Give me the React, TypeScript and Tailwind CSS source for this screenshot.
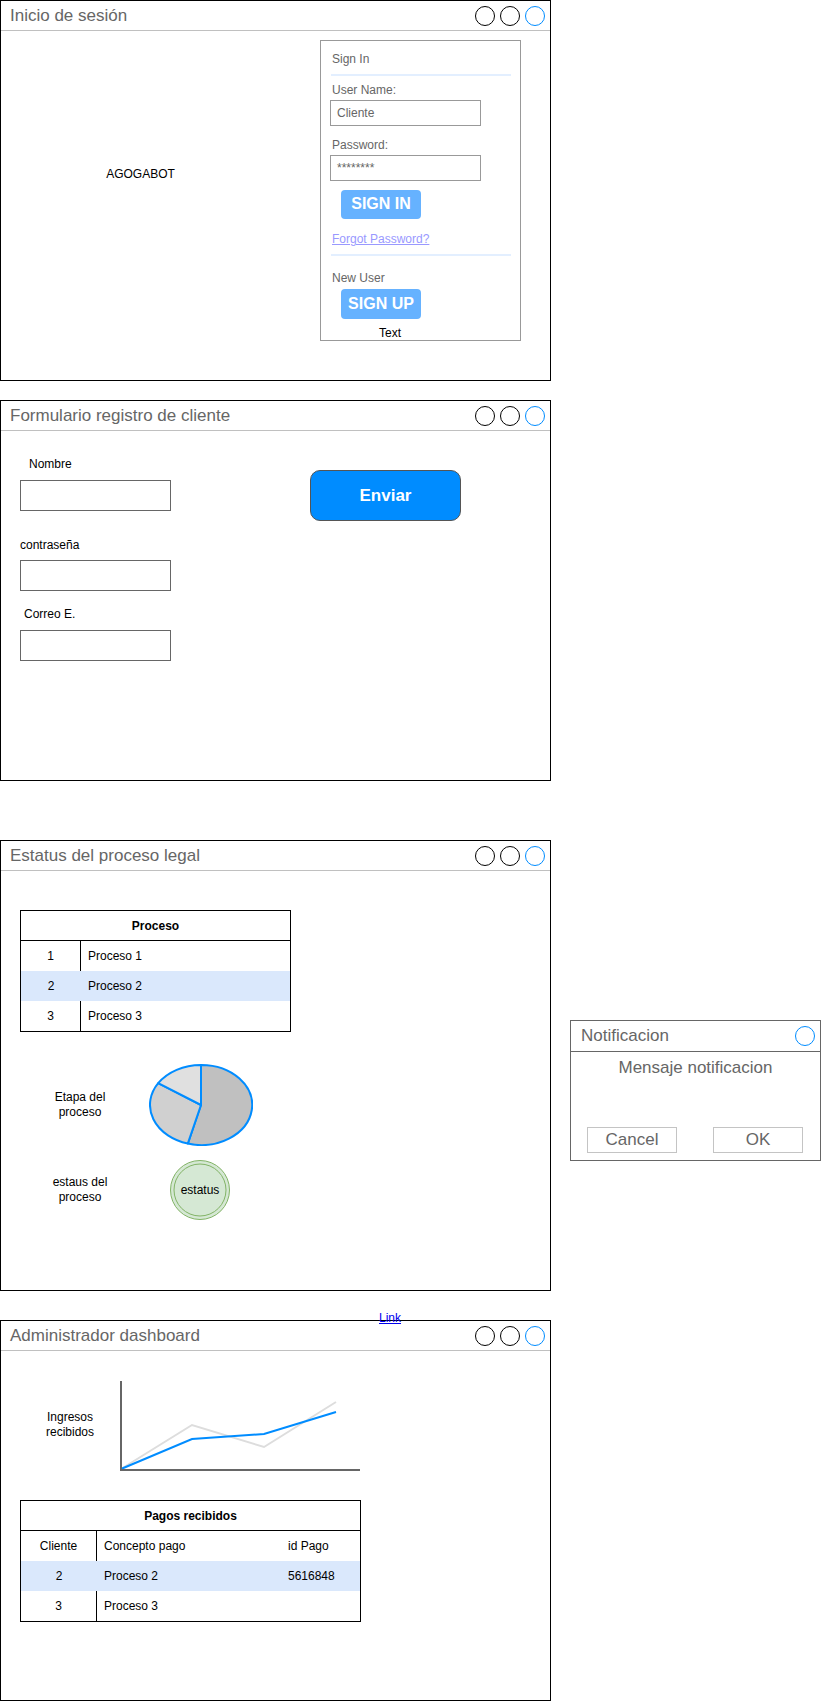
import React from "react";

const font = "font-['Liberation_Sans',Helvetica,Arial,sans-serif]";

interface WindowProps {
  title: string;
  heightClass: string;
  children?: React.ReactNode;
}

/**
 * Wireframe browser window: grey title, three round buttons, thin rule
 */
const MockWindow: React.FC<WindowProps> = ({ title, heightClass, children }) => (
  <div className={`relative w-[551px] shrink-0 border border-black bg-white ${heightClass}`}>
    <div className="flex h-[30px] items-center justify-between border-b border-[#c0c0c0] pl-[9px] pr-[5px]">
      <span className="text-[17px] leading-5 text-[#666]">{title}</span>
      <div className="flex gap-[5px]">
        <span className="h-5 w-5 rounded-full border border-black" />
        <span className="h-5 w-5 rounded-full border border-black" />
        <span className="h-5 w-5 rounded-full border border-[#008cff]" />
      </div>
    </div>
    {children}
  </div>
);

const Sep = () => <div className="mt-[8px] h-[2px] w-[180px] bg-[#e3efff]" />;

const LoginPanel = () => (
  <div className="ml-[40px] flex h-[301px] w-[201px] flex-col border border-[#999] pl-[10px] text-[12px] leading-[14px] text-[#666]">
    <span className="mt-[11px] pl-[1px]">Sign In</span>
    <Sep />
    <span className="mt-[7px] pl-[1px]">User Name:</span>
    <div className="-ml-[1px] mt-[3px] flex h-[26px] w-[151px] items-center border border-[#999] pl-[6px]">
      Cliente
    </div>
    <span className="mt-[12px] pl-[1px]">Password:</span>
    <div className="-ml-[1px] mt-[3px] flex h-[26px] w-[151px] items-center border border-[#999] pl-[6px]">
      ********
    </div>
    <button
      type="button"
      className="ml-[10px] mt-[9px] flex h-[30px] w-[80px] items-center justify-center rounded-[4px] bg-[#66b2ff] text-[16px] font-bold text-white"
    >
      SIGN IN
    </button>
    <span className="mt-[13px] pl-[1px] text-[#9999ff] underline">Forgot Password?</span>
    <Sep />
    <span className="mt-[15px] pl-[1px]">New User</span>
    <button
      type="button"
      className="ml-[10px] mt-[4px] flex h-[30px] w-[80px] items-center justify-center rounded-[4px] bg-[#66b2ff] text-[16px] font-bold text-white"
    >
      SIGN UP
    </button>
    <span className="ml-[29px] mt-[7px] w-[60px] text-center text-black">Text</span>
  </div>
);

const Field: React.FC<{ label: string; labelPad: string; gap: string; top: string }> = ({
  label,
  labelPad,
  gap,
  top,
}) => (
  <>
    <span className={`${top} ${labelPad} text-[12px] leading-[14px]`}>{label}</span>
    <div className={`${gap} h-[31px] w-[151px] border border-[#666]`} />
  </>
);

const ProcesoTable = () => {
  const rows = [
    { n: "1", t: "Proceso 1", hi: false },
    { n: "2", t: "Proceso 2", hi: true },
    { n: "3", t: "Proceso 3", hi: false },
  ];
  return (
    <div className="mt-[39px] w-[271px] border border-black text-[12px] leading-[14px]">
      <div className="flex h-[30px] items-center justify-center border-b border-black font-bold">
        Proceso
      </div>
      {rows.map((r) => (
        <div key={r.n} className={`flex h-[30px] items-stretch ${r.hi ? "bg-[#dae8fc]" : ""}`}>
          <div
            className={`flex w-[60px] items-center justify-center ${r.hi ? "" : "border-r border-black"}`}
          >
            {r.n}
          </div>
          <div className="flex items-center pl-[7px]">{r.t}</div>
        </div>
      ))}
    </div>
  );
};

const PagosTable = () => {
  const rows = [
    { c: "Cliente", p: "Concepto pago", id: "id Pago", hi: false },
    { c: "2", p: "Proceso 2", id: "5616848", hi: true },
    { c: "3", p: "Proceso 3", id: "", hi: false },
  ];
  return (
    <div className="mt-[25px] w-[341px] border border-black text-[12px] leading-[14px]">
      <div className="flex h-[30px] items-center justify-center border-b border-black font-bold">
        Pagos recibidos
      </div>
      {rows.map((r) => (
        <div key={r.c} className={`flex h-[30px] items-stretch ${r.hi ? "bg-[#dae8fc]" : ""}`}>
          <div
            className={`flex w-[76px] items-center justify-center ${r.hi ? "" : "border-r border-black"}`}
          >
            {r.c}
          </div>
          <div className="flex w-[191px] items-center pl-[7px]">{r.p}</div>
          <div className="flex items-center">{r.id}</div>
        </div>
      ))}
    </div>
  );
};

const Pie = () => (
  <svg width="104" height="82" viewBox="0 0 104 82" className="ml-[9px]">
    <path d="M52,41 L52,1 A51,40 0 1 1 38.8,79.6 Z" fill="#c0c0c0" stroke="#008cff" strokeWidth="2" strokeLinejoin="round" />
    <path d="M52,41 L38.8,79.6 A51,40 0 0 1 9.2,19.2 Z" fill="#d0d0d0" stroke="#008cff" strokeWidth="2" strokeLinejoin="round" />
    <path d="M52,41 L9.2,19.2 A51,40 0 0 1 52,1 Z" fill="#e0e0e0" stroke="#008cff" strokeWidth="2" strokeLinejoin="round" />
  </svg>
);

const StatusBadge = () => (
  <div className="relative ml-[29px] flex h-[62px] w-[62px] items-center justify-center">
    <svg width="62" height="62" viewBox="0 0 62 62" className="absolute inset-0">
      <circle cx="31" cy="31" r="29.5" fill="#d5e8d4" stroke="#82b366" />
      <circle cx="31" cy="31" r="26" fill="none" stroke="#82b366" />
    </svg>
    <span className="relative text-[12px] leading-[14px]">estatus</span>
  </div>
);

const LineChart = () => (
  <svg width="250" height="100" viewBox="0 0 250 100">
    <polyline points="1,94 72,50 144,72 216,27" fill="none" stroke="#dddddd" strokeWidth="2" />
    <polyline points="1,94 72,64 144,59 216,37" fill="none" stroke="#008cff" strokeWidth="2" />
    <path d="M1,6 L1,95 L240,95" fill="none" stroke="#666" strokeWidth="2" />
  </svg>
);

const Notification = () => (
  <div className="ml-[19px] mt-[180px] flex h-[141px] w-[251px] flex-col border border-[#666] bg-white text-[#666]">
    <div className="flex h-[31px] items-center justify-between border-b border-[#666] pl-[10px] pr-[5px]">
      <span className="text-[17px] leading-5">Notificacion</span>
      <span className="h-5 w-5 rounded-full border border-[#008cff]" />
    </div>
    <div className="mt-[6px] text-center text-[17px] leading-5">Mensaje notificacion</div>
    <div className="mt-[49px] flex gap-[36px] pl-[16px]">
      <div className="flex h-[26px] w-[90px] items-center justify-center border border-[#c4c4c4] text-[17px]">
        Cancel
      </div>
      <div className="flex h-[26px] w-[90px] items-center justify-center border border-[#c4c4c4] text-[17px]">
        OK
      </div>
    </div>
  </div>
);

export default function App() {
  return (
    <div className={`${font} flex min-h-[1701px] w-[821px] flex-col bg-white text-black`}>
      {/* Login */}
      <MockWindow title="Inicio de sesión" heightClass="h-[381px]">
        <div className="mt-[9px] flex">
          <div className="w-[279px] pt-[127px] text-center text-[12px] leading-[14px]">AGOGABOT</div>
          <LoginPanel />
        </div>
      </MockWindow>

      {/* Registro de cliente */}
      <div className="mt-[19px]">
        <MockWindow title="Formulario registro de cliente" heightClass="h-[381px]">
          <div className="flex pl-[19px]">
            <div className="flex w-[151px] flex-col">
              <Field label="Nombre" labelPad="pl-[9px]" top="mt-[26px]" gap="mt-[9px]" />
              <Field label="contraseña" labelPad="" top="mt-[27px]" gap="mt-[8px]" />
              <Field label="Correo E." labelPad="pl-[4px]" top="mt-[16px]" gap="mt-[9px]" />
            </div>
            <button
              type="button"
              className="ml-[139px] mt-[39px] flex h-[51px] w-[151px] items-center justify-center rounded-[10px] border border-[#555] bg-[#008cff] text-[17px] font-bold text-white"
            >
              Enviar
            </button>
          </div>
        </MockWindow>
      </div>

      {/* Estatus + notificacion */}
      <div className="mt-[59px] flex items-start">
        <MockWindow title="Estatus del proceso legal" heightClass="h-[451px]">
          <div className="flex flex-col pl-[19px] text-[12px] leading-[15px]">
            <ProcesoTable />
            <div className="mt-[32px] flex items-center">
              <div className="w-[120px] text-center">
                Etapa del
                <br />
                proceso
              </div>
              <Pie />
            </div>
            <div className="mt-[13px] flex items-center">
              <div className="w-[120px] text-center">
                estaus del
                <br />
                proceso
              </div>
              <StatusBadge />
            </div>
          </div>
        </MockWindow>
        <Notification />
      </div>

      {/* Dashboard */}
      <div className="mt-[29px]">
        <MockWindow title="Administrador dashboard" heightClass="h-[381px]">
          <a
            href="#"
            className="absolute left-[378px] top-[-10px] text-[12px] leading-[14px] text-[#0000ee] underline"
          >
            Link
          </a>
          <div className="flex flex-col pl-[19px]">
            <div className="mt-[24px] flex items-center">
              <div className="w-[100px] text-center text-[12px] leading-[15px]">
                Ingresos
                <br />
                recibidos
              </div>
              <LineChart />
            </div>
            <PagosTable />
          </div>
        </MockWindow>
      </div>
    </div>
  );
}
